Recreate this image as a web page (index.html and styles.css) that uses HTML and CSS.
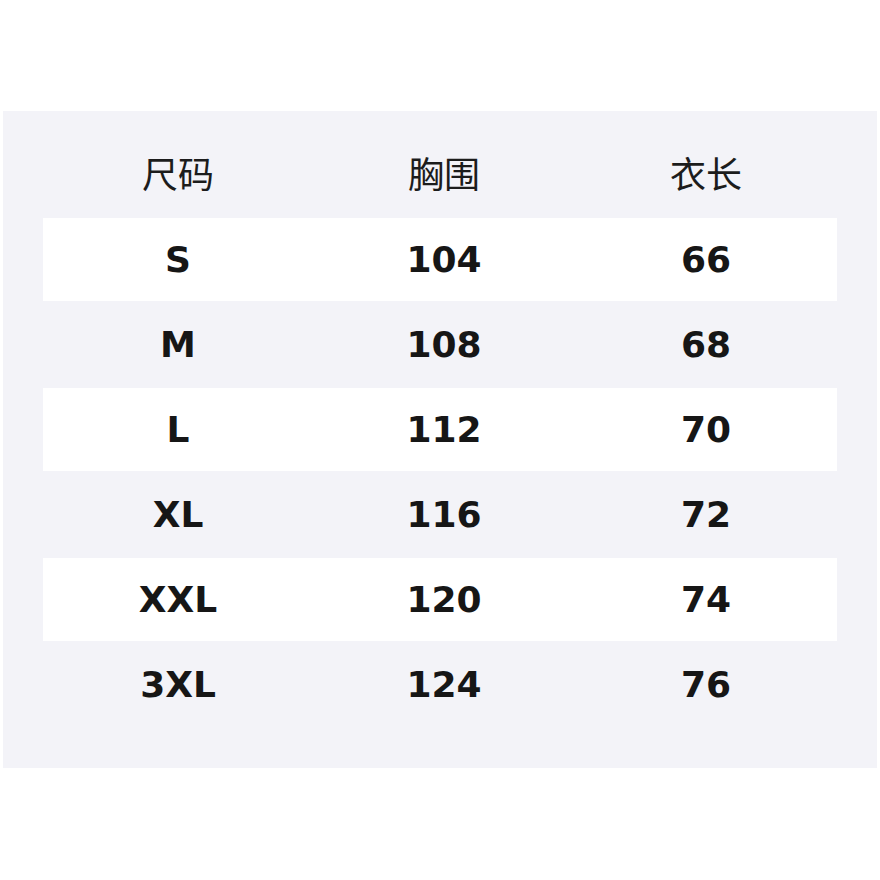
FILE: index.html
```html
<!DOCTYPE html>
<html lang="zh">
<head>
<meta charset="utf-8">
<link rel="stylesheet" href="styles.css">
</head>
<body>
<div class="page">
  <div class="panel">
    <div class="row head">
      <div class="cell">尺码</div>
      <div class="cell">胸围</div>
      <div class="cell">衣长</div>
    </div>
    <div class="row white"><div class="cell">S</div><div class="cell">104</div><div class="cell">66</div></div>
    <div class="row"><div class="cell">M</div><div class="cell">108</div><div class="cell">68</div></div>
    <div class="row white"><div class="cell">L</div><div class="cell">112</div><div class="cell">70</div></div>
    <div class="row"><div class="cell">XL</div><div class="cell">116</div><div class="cell">72</div></div>
    <div class="row white"><div class="cell">XXL</div><div class="cell">120</div><div class="cell">74</div></div>
    <div class="row"><div class="cell">3XL</div><div class="cell">124</div><div class="cell">76</div></div>
  </div>
</div>
</body>
</html>
```
FILE: styles.css
```css
html, body {
  margin: 0;
  padding: 0;
  background: #ffffff;
}
.page {
  width: 880px;
  height: 880px;
  box-sizing: border-box;
  padding-top: 111px;
  display: flex;
  align-items: flex-start;
  justify-content: center;
}
.panel {
  box-sizing: border-box;
  width: 874px;
  height: 657px;
  background: #f3f3f8;
  padding: 40px 40px 42px;
  display: flex;
  flex-direction: column;
  gap: 2px;
}
.row {
  display: grid;
  grid-template-columns: 270px 262px 262px;
  height: 83px;
  align-items: center;
  font-family: "DejaVu Sans", "Noto Sans CJK SC", sans-serif;
  font-weight: bold;
  font-size: 36px;
  color: #161616;
}
.row.white {
  background: #ffffff;
}
.row.head {
  box-sizing: border-box;
  height: 65px;
  padding-bottom: 23px;
  font-family: "Noto Sans CJK SC", sans-serif;
  font-weight: normal;
  font-size: 36px;
  color: #1c1c1c;
}
.cell {
  text-align: center;
  line-height: 1;
}
```
